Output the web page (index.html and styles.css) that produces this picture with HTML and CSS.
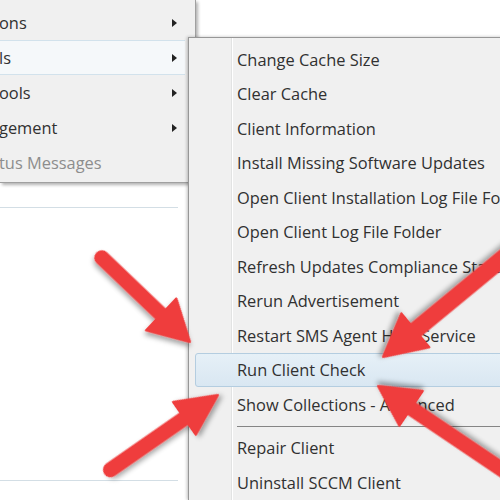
FILE: index.html
```html
<!DOCTYPE html>
<html lang="en">
<head>
  <meta charset="UTF-8">
  <title>Client Tools menu</title>
  <link rel="stylesheet" href="styles.css">
</head>
<body>
  <div class="screen">

    <div class="pane">
      <div class="pane-list"></div>
    </div>

    <ul class="menu">
      <li class="menu-item">ons<span class="caret"></span></li>
      <li class="menu-item open">ls<span class="caret"></span></li>
      <li class="menu-item">ools<span class="caret"></span></li>
      <li class="menu-item">gement<span class="caret"></span></li>
      <li class="menu-item disabled">tus Messages</li>
    </ul>

    <ul class="submenu">
      <li class="sub-item">Change Cache Size</li>
      <li class="sub-item">Clear Cache</li>
      <li class="sub-item">Client Information</li>
      <li class="sub-item">Install Missing Software Updates</li>
      <li class="sub-item">Open Client Installation Log File Folder</li>
      <li class="sub-item">Open Client Log File Folder</li>
      <li class="sub-item">Refresh Updates Compliance State</li>
      <li class="sub-item">Rerun Advertisement</li>
      <li class="sub-item">Restart SMS Agent Host Service</li>
      <li class="sub-item hover">Run Client Check</li>
      <li class="sub-item">Show Collections - Advanced</li>
      <li class="sep"></li>
      <li class="sub-item">Repair Client</li>
      <li class="sub-item">Uninstall SCCM Client</li>
    </ul>

    <!-- annotation arrows drawn over the screenshot -->
    <svg class="arrows" width="500" height="500" viewBox="0 0 500 500">
      <defs>
        <filter id="shade" x="-30%" y="-30%" width="160%" height="160%">
          <feDropShadow dx="2" dy="3" stdDeviation="2.5" flood-color="#000" flood-opacity="0.35"/>
        </filter>
      </defs>
      <g class="arrow" filter="url(#shade)" transform="translate(190 342) rotate(43.7)">
        <line x1="-122" y1="0" x2="-36" y2="0"/>
        <polygon points="0,0 -40,-22 -40,22"/>
      </g>
      <g class="arrow" filter="url(#shade)" transform="translate(218 395) rotate(-34.8)">
        <line x1="-131" y1="0" x2="-37" y2="0"/>
        <polygon points="0,0 -41,-20 -41,20"/>
      </g>
      <g class="arrow" filter="url(#shade)" transform="translate(383 357) rotate(140.5)">
        <line class="wide" x1="-184" y1="0" x2="-38" y2="0"/>
        <polygon points="0,0 -42,-22 -42,22"/>
      </g>
      <g class="arrow" filter="url(#shade)" transform="translate(378 386) rotate(-146)">
        <line x1="-160" y1="0" x2="-36" y2="0"/>
        <polygon points="0,0 -40,-21 -40,21"/>
      </g>
    </svg>

  </div>
</body>
</html>
```

FILE: styles.css
```css
* {
  box-sizing: border-box;
}

body {
  margin: 0;
  background: #fff;
  font-family: 'Open Sans', 'Liberation Sans', sans-serif;
  font-size: 16.4px;
  color: #313131;
}

ul {
  list-style: none;
  margin: 0;
  padding: 0;
}

.screen {
  position: relative;
  width: 500px;
  height: 500px;
  overflow: hidden;
  background: #fff;
}

/* window behind the popups */
.pane {
  width: 178px;
  padding-top: 207px;
}

.pane-list {
  height: 274px;
  border-top: 1px solid #d3dee5;
  border-bottom: 1px solid #d3dee5;
}

/* parent context menu (cut off at the left edge) */
.menu {
  position: absolute;
  left: 0;
  top: 0;
  width: 196px;
  padding: 5px 0 2px;
  background: #f0f0f0;
  border-right: 1px solid #a0a0a0;
  border-bottom: 1px solid #a0a0a0;
  box-shadow: 2px 2px 3px rgba(0, 0, 0, 0.3);
}

.menu-item {
  display: flex;
  align-items: center;
  justify-content: space-between;
  height: 35px;
  padding-right: 18px;
  text-indent: -1px;
}

.menu-item.open {
  background: #f5f8fa;
  border-top: 1px solid #d2e2ec;
  border-bottom: 1px solid #d2e2ec;
  margin-right: 10px;
  padding-right: 8px;
}

.menu-item.disabled {
  color: #8d8d8d;
}

.caret {
  width: 0;
  height: 0;
  border-top: 4px solid transparent;
  border-bottom: 4px solid transparent;
  border-left: 5px solid #222;
}

/* cascading submenu */
.submenu {
  position: absolute;
  left: 188px;
  top: 37px;
  width: 340px;
  padding-top: 4px;
  border: 1px solid #979797;
  border-right: 0;
  border-bottom: 0;
  box-shadow: -1px 0 3px rgba(0, 0, 0, 0.25);
  background:
    linear-gradient(to right, transparent 42px, #e2e3e3 42px, #e2e3e3 43px, #fff 43px, #fff 44px, transparent 44px),
    #f0f0f0;
}

.sub-item {
  display: flex;
  align-items: center;
  height: 34.5px;
  padding-left: 48px;
  white-space: nowrap;
}

.sub-item.hover {
  margin-left: 6px;
  padding-left: 41px;
  border: 1px solid #b4cde0;
  border-radius: 3px;
  background: linear-gradient(#e6f0f7, #d9e7f2);
}

.sep {
  height: 9px;
  margin-left: 48px;
  display: flex;
  align-items: center;
}

.sep::before {
  content: '';
  flex: 1;
  height: 1px;
  background: #858585;
}

.arrows {
  position: absolute;
  left: 0;
  top: 0;
}

.arrow line {
  stroke: #ef3d3d;
  stroke-width: 15;
  stroke-linecap: round;
}

.arrow line.wide {
  stroke-width: 17;
}

.arrow polygon {
  fill: #ef3d3d;
  stroke: #ef3d3d;
  stroke-width: 2;
  stroke-linejoin: round;
}
```
